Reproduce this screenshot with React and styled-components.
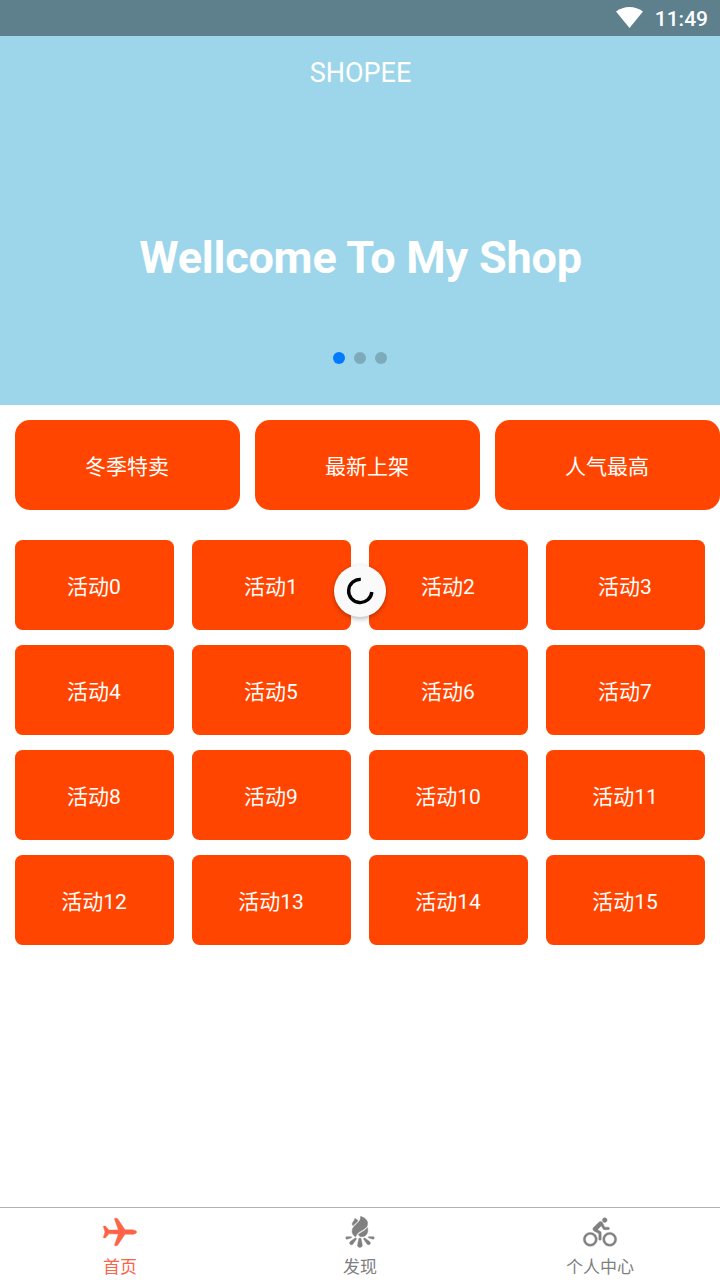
import React from 'react';
import styled, { createGlobalStyle } from 'styled-components';
import { IoIosAirplane, IoIosBonfire, IoIosBicycle } from 'react-icons/io';

const GlobalStyle = createGlobalStyle`
  * { box-sizing: border-box; }
  body {
    margin: 0;
    background: #fff;
    font-family: Roboto, 'Noto Sans CJK SC', sans-serif;
  }
`;

const Screen = styled.div`
  position: relative;
  display: flex;
  flex-direction: column;
  width: 720px;
  height: 1280px;
  overflow: hidden;
  background: #fff;
`;

const StatusBar = styled.div`
  display: flex;
  align-items: center;
  justify-content: flex-end;
  gap: 12px;
  height: 36px;
  padding-right: 12px;
  background: #5e808d;
  color: #fff;

  svg {
    margin-bottom: 1px;
  }
`;

const Clock = styled.span`
  padding-top: 1px;
  font-size: 21px;
  font-weight: 500;
  line-height: 36px;
`;

const Hero = styled.header`
  display: flex;
  flex-direction: column;
  align-items: center;
  height: 369px;
  padding-top: 21px;
  background: #9dd6eb;
  color: #fff;
`;

const Brand = styled.div`
  padding-left: 1px;
  font-size: 27px;
  line-height: 32px;
`;

const Slogan = styled.h1`
  margin: 142px 0 0;
  padding-left: 1px;
  font-size: 45px;
  font-weight: 700;
  letter-spacing: -0.2px;
  line-height: 53px;
`;

const Dots = styled.div`
  display: flex;
  gap: 9px;
  margin-top: 68px;
`;

const Dot = styled.i`
  width: 12px;
  height: 12px;
  border-radius: 50%;
  background: ${({ $active }) => ($active ? '#007aff' : 'rgba(0, 0, 0, 0.2)')};
`;

const FeaturedRow = styled.div`
  display: grid;
  grid-template-columns: repeat(3, 225px);
  gap: 15px;
  padding: 15px 0 0 15px;
`;

const ActivityGrid = styled.div`
  display: grid;
  grid-template-columns: repeat(4, 159px);
  justify-content: space-between;
  row-gap: 15px;
  padding: 30px 15px 0;
`;

const Tile = styled.div`
  display: flex;
  align-items: center;
  justify-content: center;
  height: 90px;
  padding: 3px 1px 0 0;
  border-radius: ${({ $radius }) => $radius}px;
  background: #ff4500;
  color: #fff;
  font-size: 21px;
  line-height: 30px;
`;

const Spinner = styled.div`
  position: absolute;
  top: 565px;
  left: 334px;
  display: flex;
  align-items: center;
  justify-content: center;
  width: 52px;
  height: 52px;
  border-radius: 50%;
  background: #fafafa;
  box-shadow: 0 2px 5px rgba(0, 0, 0, 0.28);
`;

const TabBar = styled.nav`
  display: grid;
  grid-template-columns: repeat(3, 1fr);
  height: 73px;
  margin-top: auto;
  border-top: 1px solid #b2b2b2;
  background: #fff;
`;

const Tab = styled.div`
  display: flex;
  flex-direction: column;
  align-items: center;
  padding-top: 5px;
  color: ${({ $active }) => ($active ? '#ff6347' : '#808080')};

  svg {
    stroke-width: 6px;
  }
`;

const TabLabel = styled.span`
  margin-top: 4px;
  font-size: 17px;
  line-height: 25px;
`;

const featured = ['冬季特卖', '最新上架', '人气最高'];
const activities = Array.from({ length: 16 }, (_, i) => `活动${i}`);
const tabs = [
  { label: '首页', Icon: IoIosAirplane, active: true },
  { label: '发现', Icon: IoIosBonfire },
  { label: '个人中心', Icon: IoIosBicycle },
];

export default function App() {
  return (
    <Screen>
      <GlobalStyle />
      <StatusBar>
        <svg width="27" height="21" viewBox="0 0 27 21">
          <path d="M0 4.6C8-1.5 19-1.5 27 4.6L13.5 21Z" fill="#fff" />
        </svg>
        <Clock>11:49</Clock>
      </StatusBar>
      <Hero>
        <Brand>SHOPEE</Brand>
        <Slogan>Wellcome To My Shop</Slogan>
        <Dots>
          <Dot $active />
          <Dot />
          <Dot />
        </Dots>
      </Hero>
      <FeaturedRow>
        {featured.map((name) => (
          <Tile key={name} $radius={15}>{name}</Tile>
        ))}
      </FeaturedRow>
      <ActivityGrid>
        {activities.map((name) => (
          <Tile key={name} $radius={7.5}>{name}</Tile>
        ))}
      </ActivityGrid>
      <Spinner>
        <svg width="28" height="28" viewBox="0 0 28 28" fill="none">
          <path d="M14.8 2.4A11.6 11.6 0 1 0 25.8 15" stroke="#000" strokeWidth="3.4" />
        </svg>
      </Spinner>
      <TabBar>
        {tabs.map(({ label, Icon, active }) => (
          <Tab key={label} $active={active}>
            <Icon size={38} />
            <TabLabel>{label}</TabLabel>
          </Tab>
        ))}
      </TabBar>
    </Screen>
  );
}
